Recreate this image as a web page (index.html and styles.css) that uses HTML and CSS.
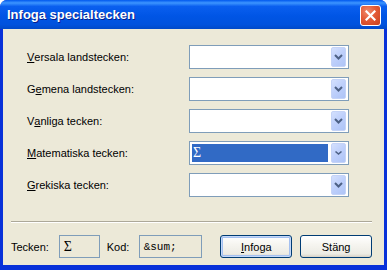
FILE: index.html
```html
<!DOCTYPE html>
<html lang="sv">
<head>
    <meta charset="UTF-8">
    <title>Infoga specialtecken</title>
    <link rel="stylesheet" href="styles.css">
</head>
<body>
    <div class="window">
        <div class="titlebar">
            <span class="title">Infoga specialtecken</span>
            <span class="close">
                <svg width="11" height="11" viewBox="0 0 11 11"><path d="M1.5 1.5 L9.5 9.5 M9.5 1.5 L1.5 9.5" stroke="#fff" stroke-width="2.2" stroke-linecap="square"/></svg>
            </span>
        </div>
        <div class="client">
            <div class="fields">
                <label class="field-label"><u>V</u>ersala landstecken:</label>
                <div class="combo"><span class="value"></span><span class="drop"><svg width="9" height="6" viewBox="0 0 9 6"><path d="M1 1 L4.5 4.5 L8 1" fill="none" stroke="#4d6185" stroke-width="2"/></svg></span></div>

                <label class="field-label">G<u>e</u>mena landstecken:</label>
                <div class="combo"><span class="value"></span><span class="drop"><svg width="9" height="6" viewBox="0 0 9 6"><path d="M1 1 L4.5 4.5 L8 1" fill="none" stroke="#4d6185" stroke-width="2"/></svg></span></div>

                <label class="field-label">V<u>a</u>nliga tecken:</label>
                <div class="combo"><span class="value"></span><span class="drop"><svg width="9" height="6" viewBox="0 0 9 6"><path d="M1 1 L4.5 4.5 L8 1" fill="none" stroke="#4d6185" stroke-width="2"/></svg></span></div>

                <label class="field-label"><u>M</u>atematiska tecken:</label>
                <div class="combo"><span class="value selected">&Sigma;</span><span class="drop"><svg width="9" height="6" viewBox="0 0 9 6"><path d="M1.5 1.5 L4.5 4 L7.5 1.5" fill="none" stroke="#4d6185" stroke-width="1.6"/></svg></span></div>

                <label class="field-label"><u>G</u>rekiska tecken:</label>
                <div class="combo"><span class="value"></span><span class="drop"><svg width="9" height="6" viewBox="0 0 9 6"><path d="M1 1 L4.5 4.5 L8 1" fill="none" stroke="#4d6185" stroke-width="2"/></svg></span></div>
            </div>
            <div class="separator"></div>
            <div class="footer">
                <span class="foot-label">Tecken:</span>
                <div class="readout char">&Sigma;</div>
                <span class="foot-label kod">Kod:</span>
                <div class="readout code">&amp;sum;</div>
                <button class="btn default"><u>I</u>nfoga</button>
                <button class="btn">Stäng</button>
            </div>
        </div>
    </div>
</body>
</html>
```

FILE: styles.css
```css
body {
    margin: 0;
    font-family: "Liberation Sans", Arial, sans-serif;
    font-size: 11px;
    color: #000;
}
.window {
    width: 387px;
    height: 270px;
    box-sizing: border-box;
    background: #0831d9;
    border-radius: 7px 7px 0 0;
    display: flex;
    flex-direction: column;
    overflow: hidden;
}
.titlebar {
    height: 29px;
    flex: none;
    display: flex;
    align-items: center;
    justify-content: space-between;
    padding: 0 6px 0 7px;
    background: linear-gradient(#0058ee 0%, #3d95ff 10%, #0a5fef 22%, #0055e5 55%, #0052dd 85%, #0049c8 100%);
}
.title {
    color: #fff;
    font-weight: bold;
    font-size: 13px;
    text-shadow: 1px 1px 0 #0a1e8a;
}
.close {
    width: 19px;
    height: 19px;
    display: flex;
    align-items: center;
    justify-content: center;
    border: 1px solid #fff;
    border-radius: 3px;
    background: radial-gradient(circle at 35% 30%, #f08a6c 0%, #e35a36 45%, #c8401c 100%);
    margin-top: 1px;
}
.client {
    flex: 1;
    margin: 0 3px 5px 3px;
    background: #ece9d8;
    padding: 16px 12px 0 8px;
}
.fields {
    display: grid;
    grid-template-columns: 162px 160px;
    row-gap: 8px;
    padding-left: 16px;
}
.field-label {
    display: flex;
    align-items: center;
    height: 24px;
}
.combo {
    height: 24px;
    box-sizing: border-box;
    border: 1px solid #7f9db9;
    background: #fff;
    display: flex;
    align-items: center;
    padding: 1px 1px 1px 2px;
}
.value {
    flex: 1;
    height: 18px;
    margin-right: 3px;
    line-height: 18px;
    padding-left: 1px;
    font-family: "Liberation Serif", "Times New Roman", serif;
    font-size: 14px;
}
.value.selected {
    background: #316ac5;
    color: #fff;
}
.drop {
    width: 15px;
    height: 20px;
    box-sizing: border-box;
    border: 1px solid #c4d3f7;
    border-radius: 2px;
    background: linear-gradient(135deg, #d4e0fd 0%, #bdcffb 50%, #aec4f6 100%);
    display: flex;
    align-items: center;
    justify-content: center;
    margin-right: 1px;
}
.separator {
    height: 1px;
    background: #aca899;
    border-bottom: 1px solid #fff;
    margin-top: 24px;
}
.footer {
    display: flex;
    align-items: center;
    margin-top: 12px;
}
.foot-label {
    width: 48px;
}
.foot-label.kod {
    width: 32px;
    margin-left: 7px;
}
.readout {
    height: 23px;
    box-sizing: border-box;
    border: 1px solid #7f9db9;
    display: flex;
    align-items: center;
    padding-left: 4px;
}
.char {
    width: 41px;
    font-family: "Liberation Serif", "Times New Roman", serif;
    font-size: 14px;
}
.code {
    width: 64px;
    font-family: "Liberation Mono", "Courier New", monospace;
    font-size: 11px;
}
.btn {
    height: 23px;
    width: 72px;
    margin-left: 8px;
    font-family: "Liberation Sans", Arial, sans-serif;
    font-size: 11px;
    color: #000;
    border: 1px solid #003c74;
    border-radius: 3px;
    background: linear-gradient(#ffffff 0%, #f6f5f0 40%, #ecebe4 85%, #d6d0c5 100%);
    padding: 0;
}
.btn:first-of-type {
    margin-left: 18px;
}
.btn.default {
    box-shadow: inset 0 0 0 1px #c4d8f8, inset 0 0 0 2px #a4c0f0;
}
```
